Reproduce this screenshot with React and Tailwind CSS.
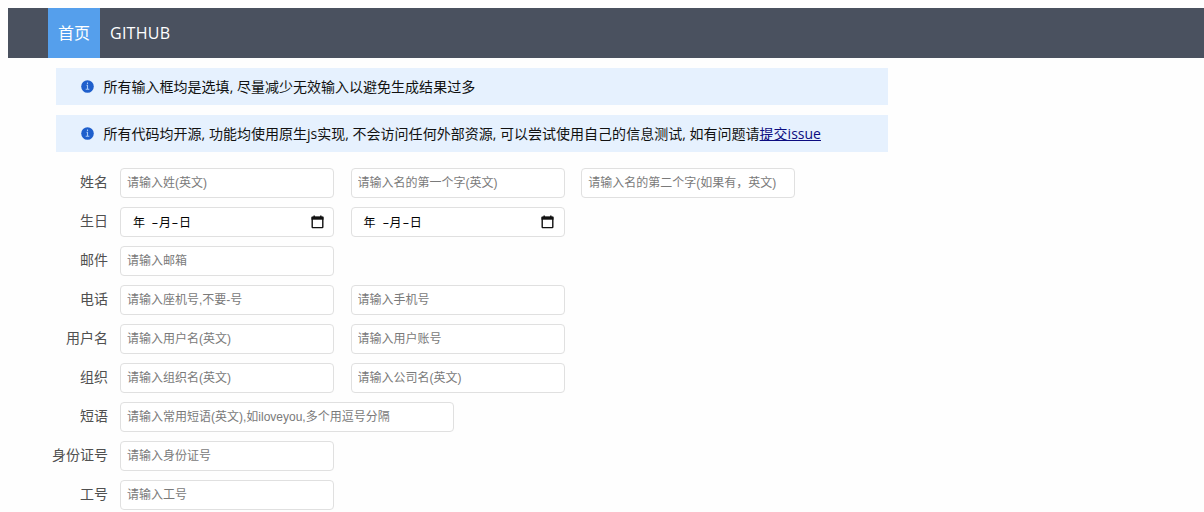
import React from 'react';

const rows = [
  {
    label: '姓名',
    fields: [
      { placeholder: '请输入姓(英文)' },
      { placeholder: '请输入名的第一个字(英文)' },
      { placeholder: '请输入名的第二个字(如果有，英文)' },
    ],
  },
  { label: '生日', fields: [{ type: 'date' }, { type: 'date' }] },
  { label: '邮件', fields: [{ placeholder: '请输入邮箱' }] },
  { label: '电话', fields: [{ placeholder: '请输入座机号,不要-号' }, { placeholder: '请输入手机号' }] },
  { label: '用户名', fields: [{ placeholder: '请输入用户名(英文)' }, { placeholder: '请输入用户账号' }] },
  { label: '组织', fields: [{ placeholder: '请输入组织名(英文)' }, { placeholder: '请输入公司名(英文)' }] },
  { label: '短语', fields: [{ placeholder: '请输入常用短语(英文),如iloveyou,多个用逗号分隔', wide: true }] },
  { label: '身份证号', fields: [{ placeholder: '请输入身份证号' }] },
  { label: '工号', fields: [{ placeholder: '请输入工号' }] },
];

const InfoIcon = () => (
  <svg className="w-[13px] h-[13px] shrink-0" viewBox="0 0 13 13">
    <circle cx="6.5" cy="6.5" r="6.3" fill="#1f5fcc" />
    <path d="M6.5 2.6v1.5M5.6 5.4h0.9v4.2M4.7 9.3h3.6" fill="none" stroke="#a9cbf7" strokeWidth="1.1" />
  </svg>
);

const CalendarIcon = () => (
  <svg className="w-[13px] h-[14px]" viewBox="0 0 13 14">
    <path d="M3.2 0.5v2M9.8 0.5v2" stroke="#111" strokeWidth="1.4" />
    <path d="M0.5 1.7h12v3h-12z" fill="#111" />
    <rect x="1.2" y="2.2" width="10.6" height="10.4" rx="0.6" fill="none" stroke="#111" strokeWidth="1.4" />
  </svg>
);

const Notice = ({ children }) => (
  <div className="flex items-center w-[832px] h-[37px] pl-[25px] bg-[#e6f1fe] text-sm text-[#111]">
    <InfoIcon />
    <p className="ml-[9.5px] whitespace-nowrap tracking-[0.015px]">{children}</p>
  </div>
);

const DateField = () => (
  <div className="flex items-center justify-between w-[214px] h-[30px] pl-3 pr-[9.5px] border border-[#e0e0e0] rounded bg-white text-xs text-black">
    <span className="flex items-center pt-px">
      <span className="mr-[6px]">年</span>
      <span className="w-[8px] text-center scale-x-175">-</span>月
      <span className="w-[8px] text-center scale-x-175">-</span>日
    </span>
    <CalendarIcon />
  </div>
);

const Field = ({ type, placeholder, wide }) => {
  if (type === 'date') {
    return <DateField />;
  }
  return (
    <input
      type="text"
      placeholder={placeholder}
      className={`${wide ? 'w-[334px]' : 'w-[214px]'} h-[30px] px-1.5 border border-[#e0e0e0] rounded bg-white font-['Liberation_Sans','Noto_Sans_CJK_SC',sans-serif] text-xs placeholder:text-[#7a7a7a] outline-none`}
    />
  );
};

const App = () => {
  return (
    <div className="h-[512px] pt-2 pl-2 overflow-hidden bg-[#fefefe] font-['Open_Sans','Noto_Sans_CJK_SC',sans-serif]">
      <nav className="flex h-[50px] pl-10 bg-[#4a515f] text-base leading-[50px] text-white">
        <a className="w-[52px] text-center bg-[#559fec]">首页</a>
        <a className="px-2.5 tracking-[0.25px]">GITHUB</a>
      </nav>

      <div className="flex flex-col gap-2.5 mt-2.5 pl-12">
        <Notice>所有输入框均是选填, 尽量减少无效输入以避免生成结果过多</Notice>
        <Notice>
          所有代码均开源, 功能均使用原生js实现, 不会访问任何外部资源, 可以尝试使用自己的信息测试, 如有问题请
          <a className="text-[#0b0b80] underline">提交issue</a>
        </Notice>
      </div>

      <form className="flex flex-col gap-[9px] mt-4">
        {rows.map((row) => (
          <div key={row.label} className="flex items-center">
            <label className="w-[100px] mr-3 pb-0.5 text-right text-sm text-[#505050]">{row.label}</label>
            <div className="flex gap-[16.6px]">
              {row.fields.map((field, i) => (
                <Field key={i} {...field} />
              ))}
            </div>
          </div>
        ))}
      </form>
    </div>
  );
};

export default App;
